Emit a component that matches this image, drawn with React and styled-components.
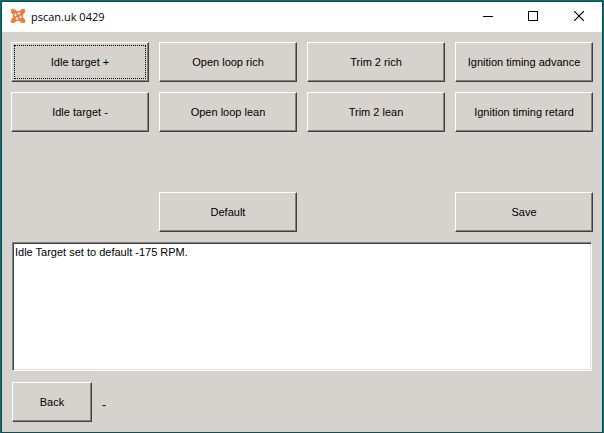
import React, { useState } from 'react';
import styled, { createGlobalStyle } from 'styled-components';

const GlobalStyle = createGlobalStyle`
  * {
    box-sizing: border-box;
  }

  body {
    margin: 0;
    font-family: 'Liberation Sans', Arial, sans-serif;
    font-size: 11px;
    color: #000;
  }
`;

const Window = styled.div`
  display: flex;
  flex-direction: column;
  min-height: 100vh;
  background-color: #d6d3ce;
  border: 1px solid #006d71;
  border-bottom: none;
`;

const WindowInner = styled.div`
  display: flex;
  flex: 1;
  flex-direction: column;
  border: 1px solid #154a4e;
`;

const TitleBar = styled.header`
  display: flex;
  align-items: center;
  height: 30px;
  padding: 0 0 2px 8px;
  background-color: #fff;
`;

const Title = styled.h1`
  flex: 1;
  margin: 0;
  padding: 2px 0 0 5px;
  font-family: 'Open Sans', 'Segoe UI', sans-serif;
  font-size: 11px;
  font-weight: 400;
  line-height: 16px;
`;

const CaptionButton = styled.button`
  display: flex;
  align-items: center;
  justify-content: center;
  width: 46px;
  height: 28px;
  padding: 0;
  border: none;
  background: transparent;

  &:hover {
    background-color: #e5e5e5;
  }
`;

const Form = styled.main`
  display: flex;
  flex: 1;
  flex-direction: column;
  gap: 10px;
  padding: 10px 9px;
`;

const ButtonGrid = styled.div`
  display: grid;
  grid-template-columns: repeat(4, 1fr);
  grid-template-rows: repeat(4, 40px);
  gap: 10px;
`;

const PushButton = styled.button`
  position: relative;
  grid-column: ${({ $column }) => $column};
  grid-row: ${({ $row }) => $row};
  width: ${({ $width }) => $width || 'auto'};
  height: 40px;
  padding: 0;
  border: 1px solid;
  border-color: #fff #424142 #424142 #fff;
  background-color: #d6d3ce;
  box-shadow: inset -1px -1px 0 #848284;
  color: #000;
  font: inherit;

  &:focus {
    outline: none;
  }

  &::after {
    content: '';
    display: ${({ $focused }) => ($focused ? 'block' : 'none')};
    position: absolute;
    inset: 2px;
    border: 1px dotted #000;
  }
`;

const Log = styled.textarea`
  flex: 1;
  min-height: 129px;
  margin: 0 1px;
  padding: 2px;
  border: 1px solid;
  border-color: #848284 #fff #fff #848284;
  background-color: #fff;
  box-shadow: inset 1px 1px 0 #424142, inset -1px -1px 0 #dedfde;
  color: #000;
  font: inherit;
  line-height: 14px;
  resize: none;
  outline: none;
`;

const Footer = styled.footer`
  display: flex;
  align-items: center;
  gap: 10px;
  padding: 1px 0 0 1px;
`;

const Status = styled.output`
  padding-top: 6px;
  font-size: 12px;
`;

const COMMANDS = [
  { label: 'Idle target +', column: 1, row: 1 },
  { label: 'Open loop rich', column: 2, row: 1 },
  { label: 'Trim 2 rich', column: 3, row: 1 },
  { label: 'Ignition timing advance', column: 4, row: 1 },
  { label: 'Idle target -', column: 1, row: 2 },
  { label: 'Open loop lean', column: 2, row: 2 },
  { label: 'Trim 2 lean', column: 3, row: 2 },
  { label: 'Ignition timing retard', column: 4, row: 2 },
  { label: 'Default', column: 2, row: 4 },
  { label: 'Save', column: 4, row: 4 },
];

const AppIcon = () => (
  <svg width="16" height="16" viewBox="0 0 16 16" aria-hidden="true">
    <path
      d="M1.2 1.5 L4 1.2 L6.5 3.2 L9.5 3.2 L12 1.2 L14.8 1.5 L14.8 4.2 L12.8 6.5 L12.8 9.5 L14.8 11.8 L14.8 14.5 L12 14.8 L9.5 12.8 L6.5 12.8 L4 14.8 L1.2 14.5 L1.2 11.8 L3.2 9.5 L3.2 6.5 L1.2 4.2 Z"
      fill="#fb7a24"
      stroke="#b5855f"
      strokeWidth="0.6"
    />
    <g fill="#fff" stroke="#a08a80" strokeWidth="0.5">
      <circle cx="9" cy="5.4" r="1.4" />
      <circle cx="5.4" cy="7" r="1.4" />
      <circle cx="10.6" cy="9" r="1.4" />
      <circle cx="7" cy="10.6" r="1.4" />
    </g>
  </svg>
);

const MinimizeIcon = () => (
  <svg width="12" height="10" viewBox="0 0 12 10" shapeRendering="crispEdges" aria-hidden="true">
    <path d="M2 5.5H12" stroke="#000" />
  </svg>
);

const MaximizeIcon = () => (
  <svg width="10" height="10" viewBox="0 0 10 10" shapeRendering="crispEdges" aria-hidden="true">
    <rect x="0.5" y="0.5" width="9" height="9" fill="none" stroke="#000" />
  </svg>
);

const CloseIcon = () => (
  <svg width="10" height="10" viewBox="0 0 10 10" aria-hidden="true">
    <path d="M0 0L10 10M10 0L0 10" stroke="#000" strokeWidth="1.2" />
  </svg>
);

const App = () => {
  const [focused, setFocused] = useState('Idle target +');
  const [log, setLog] = useState('Idle Target set to default -175 RPM.');

  return (
    <>
      <GlobalStyle />
      <Window>
        <WindowInner>
          <TitleBar>
            <AppIcon />
            <Title>pscan.uk 0429</Title>
            <CaptionButton type="button" aria-label="Minimize">
              <MinimizeIcon />
            </CaptionButton>
            <CaptionButton type="button" aria-label="Maximize">
              <MaximizeIcon />
            </CaptionButton>
            <CaptionButton type="button" aria-label="Close">
              <CloseIcon />
            </CaptionButton>
          </TitleBar>

          <Form>
            <ButtonGrid>
              {COMMANDS.map(({ label, column, row }) => (
                <PushButton
                  key={label}
                  type="button"
                  $column={column}
                  $row={row}
                  $focused={focused === label}
                  onFocus={() => setFocused(label)}
                >
                  {label}
                </PushButton>
              ))}
            </ButtonGrid>

            <Log
              aria-label="Log"
              spellCheck={false}
              value={log}
              onChange={(e) => setLog(e.target.value)}
            />

            <Footer>
              <PushButton
                type="button"
                $width="80px"
                $focused={focused === 'Back'}
                onFocus={() => setFocused('Back')}
              >
                Back
              </PushButton>
              <Status>-</Status>
            </Footer>
          </Form>
        </WindowInner>
      </Window>
    </>
  );
};

export default App;
